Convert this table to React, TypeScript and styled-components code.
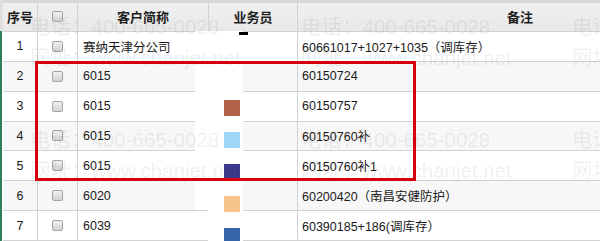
import styled, { createGlobalStyle } from "styled-components";

interface RowData {
  no: number;
  name: string;
  note: string;
}

const rows: RowData[] = [
  { no: 1, name: "赛纳天津分公司", note: "60661017+1027+1035（调库存）" },
  { no: 2, name: "6015", note: "60150724" },
  { no: 3, name: "6015", note: "60150757" },
  { no: 4, name: "6015", note: "60150760补" },
  { no: 5, name: "6015", note: "60150760补1" },
  { no: 6, name: "6020", note: "60200420（南昌安健防护）" },
  { no: 7, name: "6039", note: "60390185+186(调库存）" },
];

// colour chips left in the salesperson column after the names were blanked
const swatches = ["#b2614a", "#9ed7f7", "#3b3a8d", "#f8c48e", "#3865a7"];

const App = () => {
  return (
    <Page>
      <GlobalStyle />
      <Rail />
      <Table>
        <HeaderRow>
          <Cell $align="center">序号</Cell>
          <Cell $align="center">
            <Check />
          </Cell>
          <Cell $align="center">客户简称</Cell>
          <Cell $align="center">业务员</Cell>
          <Cell $align="center">备注</Cell>
        </HeaderRow>

        {rows.map((row) => (
          <BodyRow key={row.no} $striped={row.no % 2 === 0}>
            <Cell $align="center">{row.no}</Cell>
            <Cell $align="center">
              <Check />
            </Cell>
            <Cell $align="left" $pad={5}>
              {row.name}
            </Cell>
            <Cell $align="left" />
            <Cell $align="left" $pad={4}>
              {row.note}
            </Cell>
          </BodyRow>
        ))}
      </Table>

      {/* REDACTED SALESPERSON NAMES */}
      <Mask />
      <MaskTail />
      <Mark />
      <Swatches>
        {swatches.map((c) => (
          <Swatch key={c} $color={c} />
        ))}
      </Swatches>

      <Watermark>
        {Array.from({ length: 6 }).map((_, i) => (
          <WatermarkBlock key={i}>
            <span>电话：400-665-0028</span>
            <span>网址：www.chanjet.net</span>
          </WatermarkBlock>
        ))}
      </Watermark>

      <Highlight />
    </Page>
  );
};

const GlobalStyle = createGlobalStyle`
  html, body {
    margin: 0;
    padding: 0;
    background: #fff;
    overflow: hidden;
  }
  body {
    font-family: "Liberation Sans", "Noto Sans CJK SC", sans-serif;
  }
`;

const Page = styled.div`
  position: relative;
  display: flex;
  width: 600px;
  height: 241px;
  overflow: hidden;
  background: #fff;
`;

const Rail = styled.div`
  flex: none;
  width: 3px;
  background: linear-gradient(#e0e0e0 0 31px, transparent 31px),
    linear-gradient(to right, #2e7f59 0 2px, #fff 2px);
`;

const Table = styled.div`
  flex: none;
  width: 740px;
  display: flex;
  flex-direction: column;
`;

const columns = "35px 40px 131px 89px 445px";

const HeaderRow = styled.div`
  display: grid;
  grid-template-columns: ${columns};
  height: 32px;
  box-sizing: border-box;
  border-top: 3px solid #d8d8d8;
  background: linear-gradient(#f0f0f0, #e8e8e8);
  font-size: 13px;
  font-weight: bold;
  color: #1e1e1e;
`;

const BodyRow = styled.div<{ $striped: boolean }>`
  display: grid;
  grid-template-columns: ${columns};
  height: 30px;
  background: ${({ $striped }) => ($striped ? "#f7f7f7" : "#fff")};
  font-size: 12.5px;
  color: #1a1a1a;
`;

const Cell = styled.div<{ $align: "left" | "center"; $pad?: number }>`
  display: flex;
  align-items: center;
  justify-content: ${({ $align }) => ($align === "center" ? "center" : "flex-start")};
  padding-left: ${({ $pad }) => $pad ?? 0}px;
  box-sizing: border-box;
  border-right: 1px solid #d2d2d2;
  border-bottom: 1px solid #d2d2d2;
  white-space: nowrap;
  overflow: hidden;
`;

const Check = styled.span`
  display: block;
  width: 11px;
  height: 11px;
  box-sizing: border-box;
  border: 1px solid #a3a3a3;
  border-radius: 2px;
  background: linear-gradient(#f1f1f1, #d2d2d2);
`;

const Mask = styled.div`
  position: absolute;
  left: 195px;
  top: 31px;
  width: 48px;
  height: 179px;
  background: #fff;
`;

const MaskTail = styled.div`
  position: absolute;
  left: 208px;
  top: 210px;
  width: 35px;
  height: 31px;
  background: #fff;
`;

const Mark = styled.div`
  position: absolute;
  left: 239px;
  top: 32px;
  width: 9px;
  height: 3px;
  background: #000;
`;

const Swatches = styled.div`
  position: absolute;
  left: 224px;
  top: 100px;
  display: flex;
  flex-direction: column;
  gap: 16px;
`;

const Swatch = styled.div<{ $color: string }>`
  width: 16px;
  height: 16px;
  background: ${({ $color }) => $color};
`;

const Watermark = styled.div`
  position: absolute;
  inset: 0;
  pointer-events: none;
  display: grid;
  grid-template-columns: repeat(3, 271px);
  grid-auto-rows: 113px;
  padding: 11px 0 0 30px;
  font-size: 20.5px;
  color: rgba(0, 0, 0, 0.075);
`;

const WatermarkBlock = styled.div`
  display: flex;
  flex-direction: column;
  line-height: 31px;
  white-space: nowrap;
`;

const Highlight = styled.div`
  position: absolute;
  left: 35px;
  top: 61px;
  width: 381px;
  height: 120px;
  box-sizing: border-box;
  border: 3px solid #d6000c;
`;

export default App;
